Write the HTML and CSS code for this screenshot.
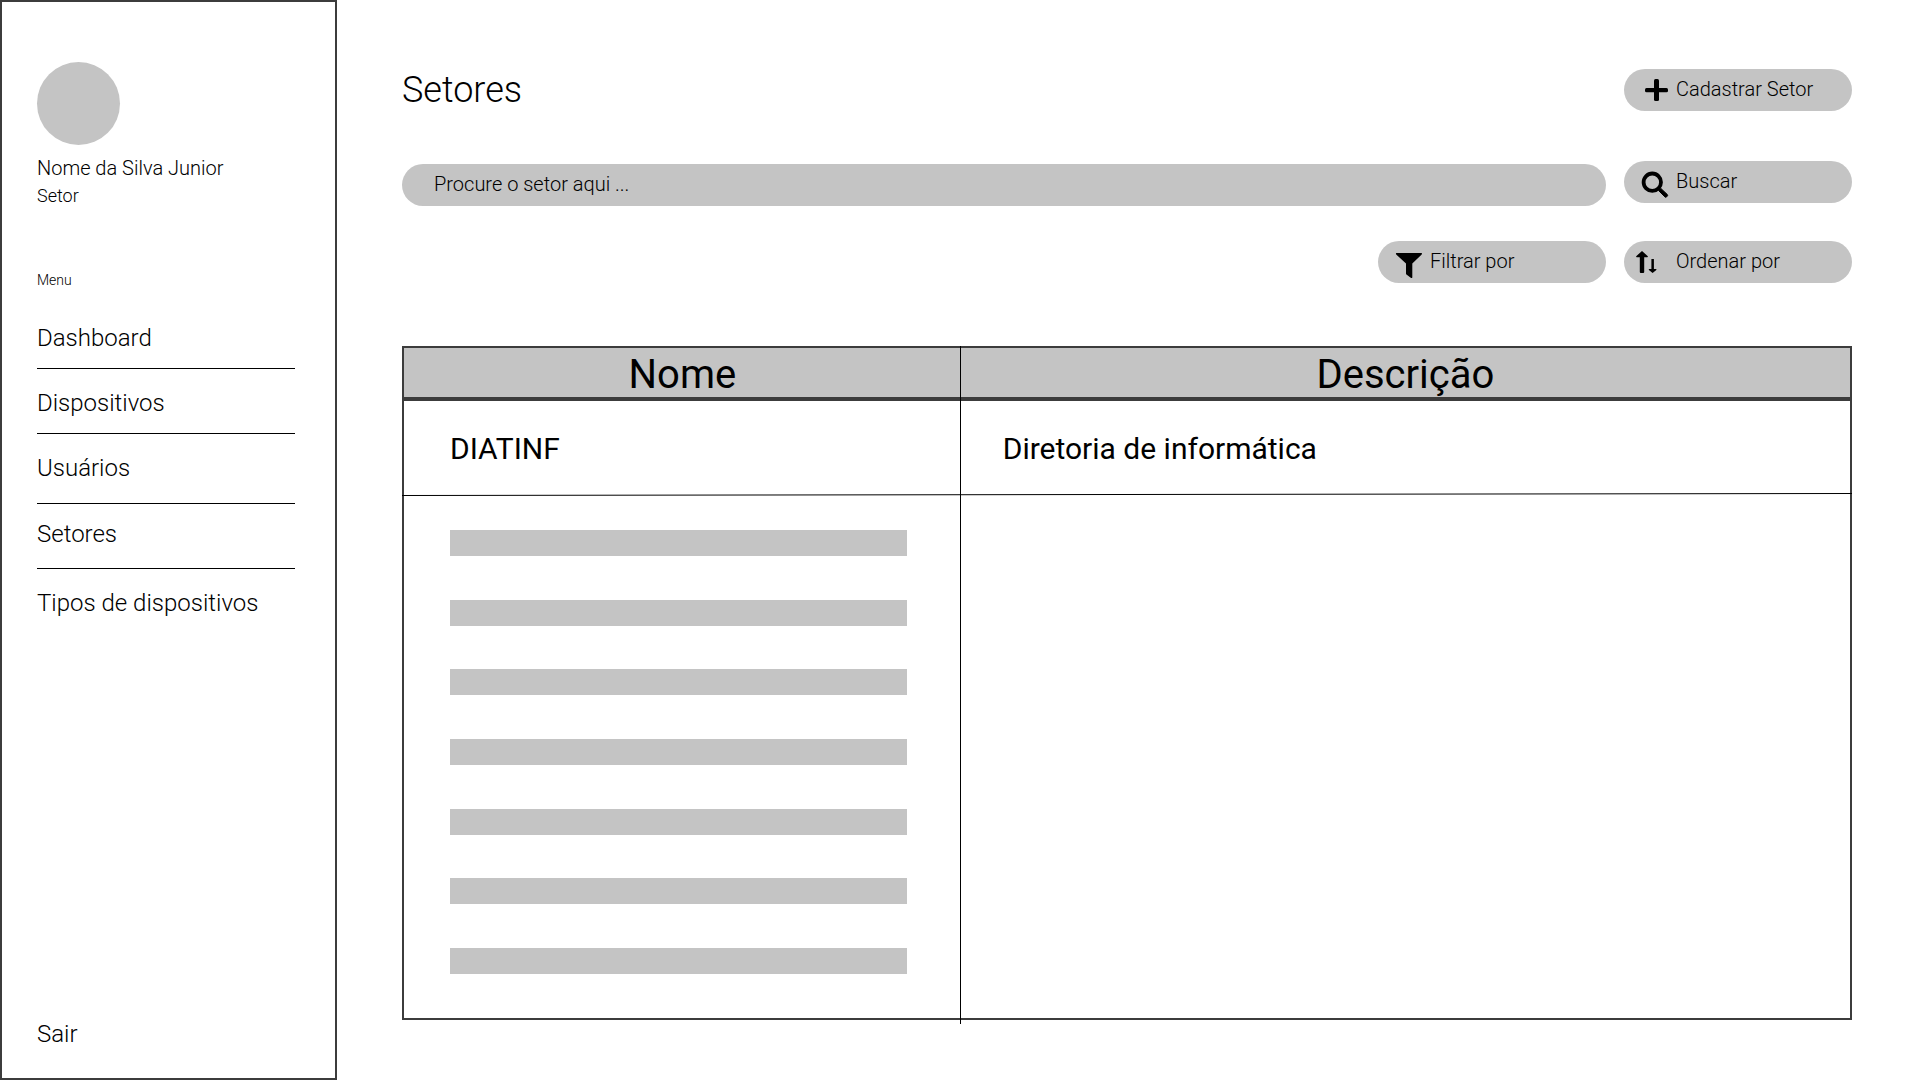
FILE: index.html
```html
<!DOCTYPE html>
<html lang="pt-BR">
<head>
<meta charset="utf-8">
<meta name="viewport" content="width=device-width, initial-scale=1">
<title>Setores</title>
<link rel="stylesheet" href="styles.css">
</head>
<body>
<div class="page">
  <aside class="sidebar">
    <div class="avatar"></div>
    <p class="user-name">Nome da Silva Junior</p>
    <p class="user-sector">Setor</p>
    <h2 class="menu-title">Menu</h2>
    <nav class="menu">
      <a class="menu-item" href="#">Dashboard</a>
      <a class="menu-item" href="#">Dispositivos</a>
      <a class="menu-item menu-item-tall" href="#">Usuários</a>
      <a class="menu-item menu-item-current" href="#">Setores</a>
      <a class="menu-item" href="#">Tipos de dispositivos</a>
    </nav>
    <a class="logout" href="#">Sair</a>
  </aside>

  <main class="content">
    <header class="title-row">
      <h1 class="title">Setores</h1>
      <button class="pill" type="button">
        <svg class="icon" viewBox="0 0 52 42" aria-hidden="true"><rect x="30" y="10" width="5" height="22" rx="1.5"/><rect x="21" y="19" width="23" height="4.3" rx="1.5"/></svg>
        Cadastrar Setor
      </button>
    </header>

    <form class="search-row">
      <input class="search" type="search" placeholder="Procure o setor aqui ..." aria-label="Procure o setor">
      <button class="pill" type="button">
        <svg class="icon" viewBox="0 0 52 42" aria-hidden="true"><circle cx="28.3" cy="21.2" r="8.7" fill="none" stroke="#000" stroke-width="3.8"/><path d="M34.6 29.6l2.2-2.2 6.5 6.1q.8.8 0 1.6l-.8.8q-.8.8-1.6 0z" stroke="#000" stroke-width="1"/></svg>
        Buscar
      </button>
    </form>

    <div class="tools-row">
      <button class="pill" type="button">
        <svg class="icon" viewBox="0 0 52 42" aria-hidden="true"><path d="M18.4 12h25q1.1.3.3 1.4l-9.4 9v14q-.3.9-1.2.5L28.4 33.5q-.4-.4-.4-1V22.4l-9.8-9q-.7-1.1.2-1.4z"/></svg>
        Filtrar por
      </button>
      <button class="pill" type="button">
        <svg class="icon" viewBox="0 0 52 42" aria-hidden="true"><path d="M18 10l5.8 5.2q.3.8-.5 1H20.2V31q0 1-1 1h-2.4q-1 0-1-1V16.2h-3.1q-.8-.2-.5-1zM27.4 18h2.500v10h2.200q.6.300.2.900L28.600 32l-3.700-3.100q-.4-.6.200-.9h2.300z"/></svg>
        Ordenar por
      </button>
    </div>

    <div class="table-frame">
      <table class="sectors">
        <thead>
          <tr><th class="col-name" scope="col">Nome</th><th scope="col">Descrição</th></tr>
        </thead>
        <tbody>
          <tr><td class="col-name">DIATINF</td><td>Diretoria de informática</td></tr>
          <tr class="loading">
            <td class="col-name">
              <div class="bars">
                <div class="bar"></div>
                <div class="bar"></div>
                <div class="bar"></div>
                <div class="bar"></div>
                <div class="bar"></div>
                <div class="bar"></div>
                <div class="bar"></div>
              </div>
            </td>
            <td></td>
          </tr>
        </tbody>
      </table>
      <svg class="row-rule" aria-hidden="true"><line x1="0" y1="3.5" x2="100%" y2="1.5" stroke="#000"/></svg>
      <div class="column-rule"></div>
    </div>
  </main>
</div>
</body>
</html>
```
FILE: styles.css
```css
:root {
  --line: #3c3c3c;
  --fill: #c4c4c4;
}

* {
  box-sizing: border-box;
}

body {
  margin: 0;
  background: #fff;
  color: #000;
  font-family: Roboto, "Liberation Sans", sans-serif;
  font-weight: 300;
}

.page {
  display: flex;
  min-height: 100vh;
}

/* Sidebar */
.sidebar {
  display: flex;
  flex-direction: column;
  flex: 0 0 337px;
  padding: 60px 40px 30px 35px;
  border: 2px solid var(--line);
}

.avatar {
  width: 83px;
  height: 83px;
  border-radius: 50%;
  background: var(--fill);
}

.user-name {
  margin: 11px 0 0;
  font-size: 20px;
  line-height: 24px;
}

.user-sector {
  margin: 5px 0 0;
  font-size: 18px;
  line-height: 22px;
}

.menu-title {
  margin: 65px 0 16px;
  font-size: 14px;
  font-weight: 300;
  line-height: 16px;
}

.menu {
  display: flex;
  flex-direction: column;
}

.menu-item,
.logout {
  color: inherit;
  font-size: 24px;
  line-height: 28px;
  text-decoration: none;
}

.menu-item {
  padding: 20px 0 16px;
  border-bottom: 1px solid #000;
}

.menu-item-tall {
  padding-bottom: 21px;
}

.menu-item-current {
  padding: 16px 0 20px;
}

.menu-item:last-child {
  border-bottom: 0;
}

.logout {
  margin-top: auto;
}

/* Content */
.content {
  flex: 1;
  min-width: 0;
  padding: 66px 68px 60px 65px;
}

.title-row,
.search-row,
.tools-row {
  display: flex;
  align-items: flex-start;
  gap: 18px;
}

.title-row {
  justify-content: space-between;
  padding-top: 3px;
}

.title {
  margin: 0;
  font-size: 36px;
  font-weight: 300;
  line-height: 42px;
}

.search-row {
  margin-top: 50px;
}

.tools-row {
  justify-content: flex-end;
  margin-top: 35px;
}

.pill,
.search {
  height: 42px;
  border: 0;
  border-radius: 21px;
  background: var(--fill);
  color: #000;
  font: inherit;
  font-size: 20px;
  line-height: 24px;
}

.pill {
  display: flex;
  flex: 0 0 228px;
  align-items: center;
  padding: 0 0 2px;
  text-align: left;
  cursor: pointer;
}

.icon {
  flex: none;
  align-self: flex-start;
  width: 52px;
  height: 42px;
}

.search {
  flex: 1;
  min-width: 0;
  margin-top: 3px;
  padding: 0 32px 2px;
  appearance: none;
}

.search::placeholder {
  color: #000;
  opacity: 1;
}

/* Table */
.table-frame {
  position: relative;
  margin-top: 63px;
}

.sectors {
  width: 100%;
  border: 2px solid var(--line);
  border-spacing: 0;
  table-layout: fixed;
}

.sectors th {
  padding: 5px 0 0;
  border-bottom: 4px solid var(--line);
  background: var(--fill);
  font-size: 40px;
  font-weight: 400;
  line-height: 44px;
}

.sectors td {
  padding: 30px 42px 28px;
  font-size: 30px;
  font-weight: 400;
  line-height: 36px;
}

.sectors .col-name {
  width: 38.5%;
}

.sectors td.col-name {
  padding-right: 54px;
  padding-left: 46px;
}

.sectors .loading td {
  padding-top: 35px;
  padding-bottom: 44px;
}

.bars {
  display: flex;
  flex-direction: column;
  justify-content: space-between;
  height: 444px;
}

.bar {
  height: 26px;
  background: var(--fill);
}

/* Rules drawn over the table, edge to edge */
.row-rule {
  position: absolute;
  top: 146px;
  left: 0;
  width: 100%;
  height: 5px;
}

.column-rule {
  position: absolute;
  top: 0;
  bottom: -4px;
  left: 38.5%;
  width: 1px;
  background: #000;
}
```
